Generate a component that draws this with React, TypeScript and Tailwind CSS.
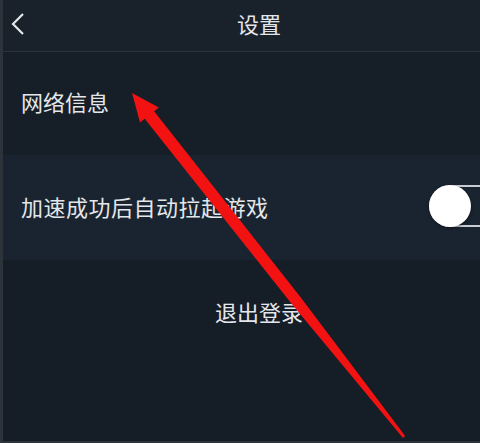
import React from 'react';

const cjk = { fontFamily: '"Noto Sans CJK SC", "Noto Sans", sans-serif' };

// Red hand-drawn annotation arrow that sits over the settings list
const Arrow: React.FC = () => (
  <svg
    className="absolute left-0 top-0 pointer-events-none"
    width="480"
    height="443"
    viewBox="0 0 480 443"
  >
    <polygon
      fill="#f31212"
      points="132,93 158.8,107.6 154.1,111.3 300,296.6 404.8,435.5 404,437.8 402.4,437.3 291.4,303.4 144.7,118.7 140,122.4"
    />
  </svg>
);

const Toggle: React.FC = () => (
  <div className="relative h-[42px] w-[60px]">
    <div className="absolute left-0 top-0 h-[42px] w-[80px] rounded-full border-2 border-[#c9cdd1] bg-[#1a2430]" />
    <div className="absolute left-0 top-0 h-[42px] w-[42px] rounded-full bg-white shadow-[0_1px_3px_rgba(0,0,0,0.5)]" />
  </div>
);

const App: React.FC = () => {
  return (
    <div className="relative h-[443px] w-[480px] overflow-hidden bg-[#151d27]" style={cjk}>
      <div className="flex h-full w-[518px] flex-col border-l-[3px] border-b-2 border-[#2c333b] text-[#e4e7ea]">
        {/* Header */}
        <div className="relative flex h-[52px] shrink-0 items-center justify-center border-b border-[#2a323c] bg-[#19212b] pb-[6px]">
          <svg
            className="absolute left-[7px] top-[12px]"
            width="16"
            height="24"
            viewBox="0 0 16 24"
            fill="none"
          >
            <path d="M13 2 L3 12 L13 22" stroke="#e4e7ea" strokeWidth="2.2" />
          </svg>
          <span className="text-[22px] leading-none -ml-[3px]">设置</span>
        </div>

        {/* 网络信息 */}
        <div className="flex h-[103px] shrink-0 items-center bg-[#161e28] pl-[18px] pb-[6px]">
          <span className="text-[22px] leading-none">网络信息</span>
        </div>

        {/* 自动拉起游戏 */}
        <div className="flex h-[105px] shrink-0 items-center justify-between bg-[#1a2430] pl-[18px] pr-0 pb-[4px]">
          <span className="text-[22px] leading-none tracking-[0.5px]">加速成功后自动拉起游戏</span>
          <div className="w-[89px]">
            <Toggle />
          </div>
        </div>

        {/* 退出登录 */}
        <div className="flex h-[106px] shrink-0 items-center justify-center bg-[#151d27] pb-[4px]">
          <span className="text-[22px] leading-none -ml-[3px]">退出登录</span>
        </div>
        <div className="flex-1 bg-[#151d27]" />
      </div>
      <Arrow />
    </div>
  );
};

export default App;
